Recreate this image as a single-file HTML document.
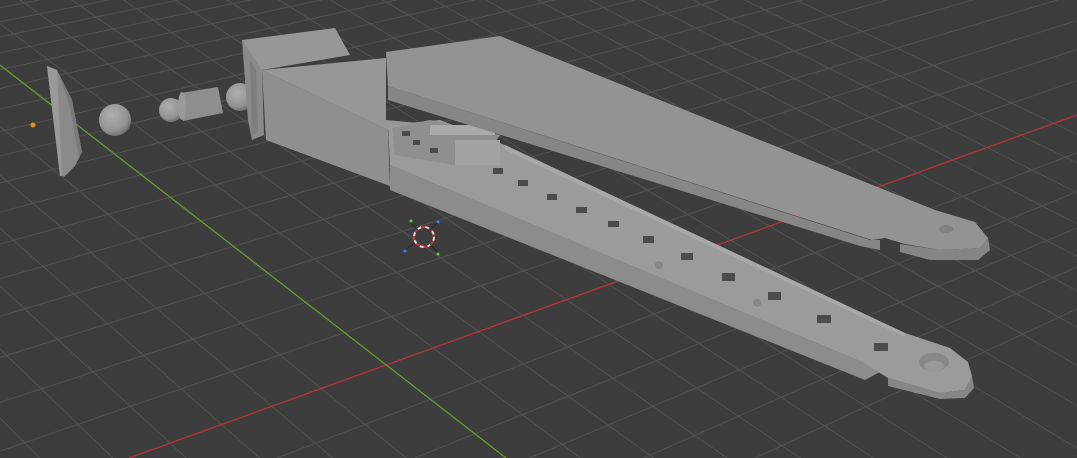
<!DOCTYPE html>
<html><head><meta charset="utf-8"><style>
html,body{margin:0;padding:0;background:#3d3d3d;overflow:hidden;width:1077px;height:458px}
svg{display:block}
</style></head><body>
<svg width="1077" height="458" viewBox="0 0 1077 458" xmlns="http://www.w3.org/2000/svg">
<rect width="1077" height="458" fill="#3d3d3d"/>
<g stroke="#525252" stroke-width="1" fill="none">
<line x1="3000" y1="-581" x2="-200" y2="900"/>
<line x1="3000" y1="-581" x2="-200" y2="830"/>
<line x1="3000" y1="-581" x2="-200" y2="765"/>
<line x1="3000" y1="-581" x2="-200" y2="705"/>
<line x1="3000" y1="-581" x2="-200" y2="640"/>
<line x1="3000" y1="-581" x2="-200" y2="520"/>
<line x1="3000" y1="-581" x2="-200" y2="468"/>
<line x1="3000" y1="-581" x2="-200" y2="420"/>
<line x1="3000" y1="-581" x2="-200" y2="376"/>
<line x1="3000" y1="-581" x2="-200" y2="336"/>
<line x1="3000" y1="-581" x2="-200" y2="299"/>
<line x1="3000" y1="-581" x2="-200" y2="265"/>
<line x1="3000" y1="-581" x2="-200" y2="234"/>
<line x1="3000" y1="-581" x2="-200" y2="205"/>
<line x1="3000" y1="-581" x2="-200" y2="179"/>
<line x1="3000" y1="-581" x2="-200" y2="155"/>
<line x1="3000" y1="-581" x2="-200" y2="133"/>
<line x1="3000" y1="-581" x2="-200" y2="113"/>
<line x1="3000" y1="-581" x2="-200" y2="95"/>
<line x1="3000" y1="-581" x2="-200" y2="78"/>
<line x1="3000" y1="-581" x2="-200" y2="62"/>
<line x1="3000" y1="-581" x2="-200" y2="47"/>
<line x1="3000" y1="-581" x2="-200" y2="33"/>
<line x1="3000" y1="-581" x2="-200" y2="20"/>
<line x1="3000" y1="-581" x2="-200" y2="8"/>
<line x1="3000" y1="-581" x2="-200" y2="-4"/>
<line x1="-1500" y1="-1099" x2="-700" y2="600"/>
<line x1="-1500" y1="-1099" x2="-620" y2="600"/>
<line x1="-1500" y1="-1099" x2="-540" y2="600"/>
<line x1="-1500" y1="-1099" x2="-460" y2="600"/>
<line x1="-1500" y1="-1099" x2="-380" y2="600"/>
<line x1="-1500" y1="-1099" x2="-300" y2="600"/>
<line x1="-1500" y1="-1099" x2="-220" y2="600"/>
<line x1="-1500" y1="-1099" x2="-140" y2="600"/>
<line x1="-1500" y1="-1099" x2="-60" y2="600"/>
<line x1="-1500" y1="-1099" x2="20" y2="600"/>
<line x1="-1500" y1="-1099" x2="100" y2="600"/>
<line x1="-1500" y1="-1099" x2="180" y2="600"/>
<line x1="-1500" y1="-1099" x2="260" y2="600"/>
<line x1="-1500" y1="-1099" x2="340" y2="600"/>
<line x1="-1500" y1="-1099" x2="420" y2="600"/>
<line x1="-1500" y1="-1099" x2="500" y2="600"/>
<line x1="-1500" y1="-1099" x2="580" y2="600"/>
<line x1="-1500" y1="-1099" x2="770" y2="600"/>
<line x1="-1500" y1="-1099" x2="850" y2="600"/>
<line x1="-1500" y1="-1099" x2="930" y2="600"/>
<line x1="-1500" y1="-1099" x2="1010" y2="600"/>
<line x1="-1500" y1="-1099" x2="1090" y2="600"/>
<line x1="-1500" y1="-1099" x2="1170" y2="600"/>
<line x1="-1500" y1="-1099" x2="1250" y2="600"/>
<line x1="-1500" y1="-1099" x2="1330" y2="600"/>
<line x1="-1500" y1="-1099" x2="1410" y2="600"/>
<line x1="-1500" y1="-1099" x2="1490" y2="600"/>
<line x1="-1500" y1="-1099" x2="1570" y2="600"/>
<line x1="-1500" y1="-1099" x2="1650" y2="600"/>
<line x1="-1500" y1="-1099" x2="1730" y2="600"/>
<line x1="-1500" y1="-1099" x2="1810" y2="600"/>
<line x1="-1500" y1="-1099" x2="1890" y2="600"/>
<line x1="-1500" y1="-1099" x2="1970" y2="600"/>
<line x1="-1500" y1="-1099" x2="2050" y2="600"/>
</g>
<line x1="129" y1="458" x2="1077" y2="115" stroke="#b5323f" stroke-width="1.3"/>
<line x1="0" y1="65" x2="506" y2="458" stroke="#6b9a2a" stroke-width="1.3"/>
<circle cx="33" cy="125" r="2.5" fill="#e8912a"/>

<polygon points="47,66 57,70 72,100 82,152 75,166 64,177 60,174" fill="#8a8a8a"/>
<polygon points="57,70 72,100 82,152 79,157 69,104" fill="#7a7a7a"/>
<polygon points="47,66 57,70 62,176 60,176" fill="#9a9a9a"/>
<defs>
<radialGradient id="sg" cx="0.4" cy="0.35" r="0.7"><stop offset="0" stop-color="#b0b0b0"/><stop offset="0.7" stop-color="#929292"/><stop offset="1" stop-color="#6a6a6a"/></radialGradient>
</defs>
<circle cx="115" cy="120" r="16" fill="url(#sg)"/>
<circle cx="171" cy="110" r="12" fill="url(#sg)"/>
<polygon points="181,93 218,87 223,113 183,121" fill="#8e8e8e"/>
<ellipse cx="182" cy="106" rx="4" ry="14" fill="#9a9a9a"/>
<circle cx="240" cy="97" r="14" fill="url(#sg)"/>

<polygon points="242,40 335,28 350,55 262,70 255,70" fill="#979797"/>
<polygon points="242,40 262,70 264,135 252,140 248,120" fill="#8a8a8a"/>
<polygon points="250,60 256,70 258,130 252,136" fill="#7d7d7d"/>
<polygon points="262,70 386,58 386,120 440,125 388,130" fill="#979797"/>
<polygon points="262,70 388,130 390,186 266,140" fill="#8f8f8f"/>

<!-- lower arm side -->
<polygon points="390,165 862,362 880,372 865,380 390,190" fill="#8c8c8c"/>
<!-- lower arm top -->
<polygon points="388,125 440,120 505,145 905,333 950,348 968,362 972,376 965,390 940,393 888,378 862,362 390,165" fill="#9b9b9b"/>
<polygon points="505,145 905,333 905,337 505,150" fill="#a8a8a8"/>
<polygon points="888,378 940,393 965,390 972,376 974,388 965,398 940,399 888,386" fill="#868686"/>
<ellipse cx="934" cy="362" rx="15" ry="9" fill="#888"/>
<ellipse cx="934" cy="366" rx="10" ry="5" fill="#9a9a9a"/>
<polygon points="392,128 430,120 500,135 490,150 455,165 395,155" fill="#8f8f8f"/>
<rect x="455" y="140" width="45" height="25" fill="#a2a2a2"/>
<rect x="430" y="125" width="65" height="10" fill="#aaaaaa"/>
<g fill="#4b4b4b">
<rect x="402" y="131" width="8" height="5"/>
<rect x="430" y="148" width="8" height="5"/>
<rect x="413" y="140" width="7" height="5"/>
<rect x="493" y="168" width="10" height="6"/>
<rect x="518" y="180" width="10" height="6"/>
<rect x="547" y="194" width="10" height="6"/>
<rect x="576" y="207" width="11" height="6"/>
<rect x="608" y="221" width="11" height="6"/>
<rect x="643" y="236" width="11" height="7"/>
<rect x="681" y="253" width="12" height="7"/>
<rect x="722" y="273" width="13" height="8"/>
<rect x="768" y="292" width="13" height="8"/>
<rect x="817" y="315" width="14" height="8"/>
<rect x="874" y="343" width="14" height="8"/>
</g>
<circle cx="659" cy="265" r="4" fill="#888"/>
<circle cx="757" cy="303" r="4" fill="#888"/>

<polygon points="388,86 870,240 880,240 880,250 860,246 388,100" fill="#868686"/>
<polygon points="386,52 500,36 935,210 975,222 988,238 980,248 940,250 905,244 885,238 872,240 388,86" fill="#939393"/>
<polygon points="900,244 940,250 980,248 988,238 990,250 978,260 930,260 900,252" fill="#858585"/>
<ellipse cx="946" cy="229" rx="7" ry="4" fill="#828282"/>

<circle cx="424" cy="237" r="10" fill="none" stroke="#d8d8d8" stroke-width="2" stroke-dasharray="4 4"/>
<circle cx="424" cy="237" r="10" fill="none" stroke="#c33" stroke-width="2" stroke-dasharray="4 4" stroke-dashoffset="4"/>
<line x1="410" y1="222" x2="418" y2="230" stroke="#222" stroke-width="1"/>
<line x1="438" y1="222" x2="430" y2="230" stroke="#222" stroke-width="1"/>
<line x1="405" y1="250" x2="415" y2="243" stroke="#222" stroke-width="1"/>
<line x1="438" y1="253" x2="430" y2="244" stroke="#222" stroke-width="1"/>
<circle cx="411" cy="221" r="1.5" fill="#6c3"/>
<circle cx="438" cy="222" r="1.5" fill="#38f"/>
<circle cx="405" cy="251" r="1.5" fill="#38f"/>
<circle cx="438" cy="254" r="1.5" fill="#6c3"/>
</svg>
</body></html>
